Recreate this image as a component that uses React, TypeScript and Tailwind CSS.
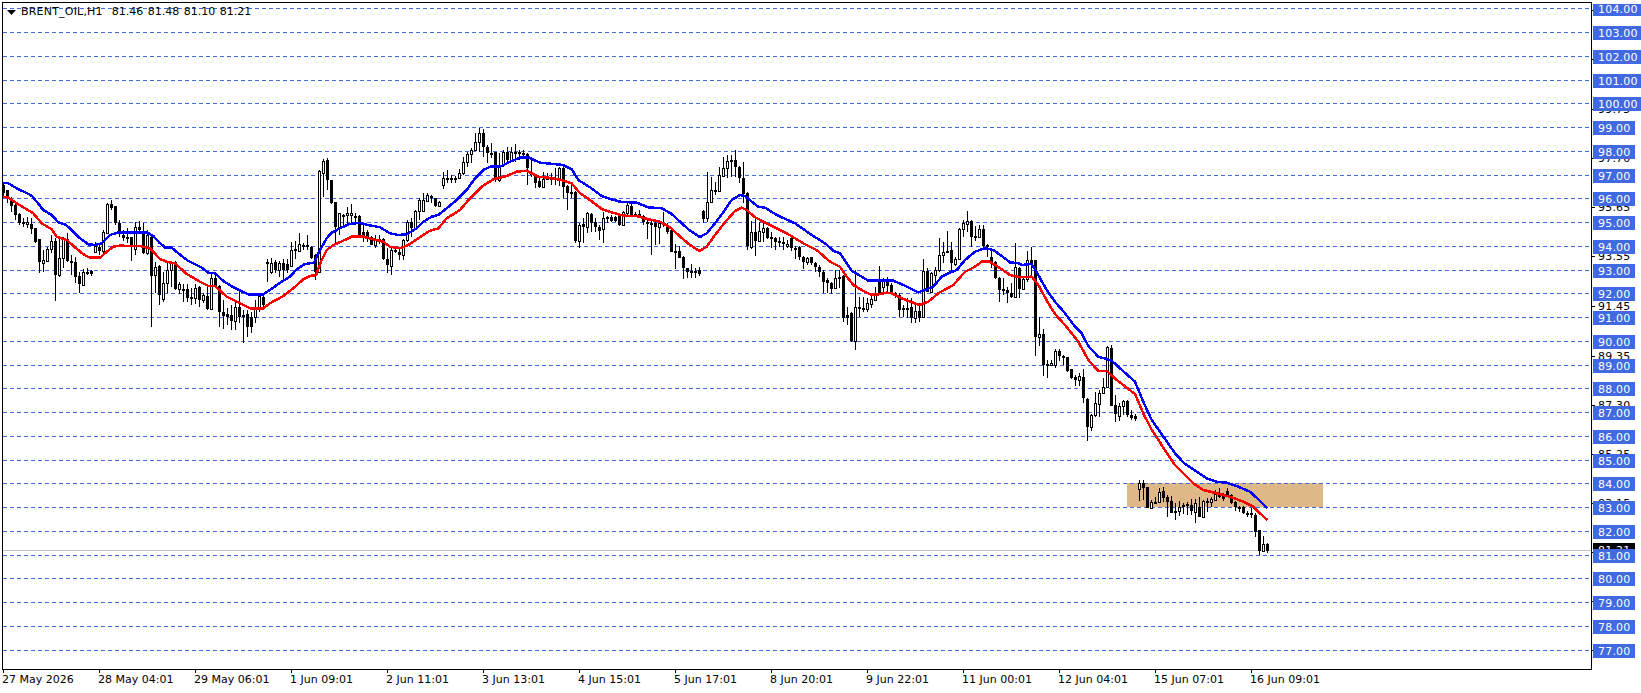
import type { ReactElement } from 'react';

// price levels drawn as horizontal lines: [label, y]
const levels: [string, number][] = [
  ['104.00', 8], ['103.00', 32], ['102.00', 56], ['101.00', 80], ['100.00', 103],
  ['99.00', 127], ['98.00', 151], ['97.00', 175], ['96.00', 198], ['95.00', 222],
  ['94.00', 246], ['93.00', 270], ['92.00', 293], ['91.00', 317], ['90.00', 341],
  ['89.00', 365], ['88.00', 388], ['87.00', 412], ['86.00', 436], ['85.00', 460],
  ['84.00', 483], ['83.00', 507], ['82.00', 531], ['81.00', 555], ['80.00', 578],
  ['79.00', 602], ['78.00', 626], ['77.00', 650],
];

const priceTicks: [string, number][] = [
  ['99.75', 109], ['97.70', 158], ['95.65', 207], ['93.55', 256], ['91.45', 306],
  ['89.35', 356], ['87.30', 405], ['85.25', 454], ['83.15', 503],
];
const hiddenTicks = [10, 59, 552, 601, 650];

const times = [
  '27 May 2026', '28 May 04:01', '29 May 06:01', '1 Jun 09:01', '2 Jun 11:01', '3 Jun 13:01', '4 Jun 15:01',
  '5 Jun 17:01', '8 Jun 20:01', '9 Jun 22:01', '11 Jun 00:01', '12 Jun 04:01', '15 Jun 07:01', '16 Jun 09:01',
];

// candles: [bodyTop, bodyBottom, high, low, bull], read off 3x crops
type Bar = [number, number, number, number, number];
type Segment = { oy: number; bars: Bar[] };

const segments: Segment[] = [
  {
    oy: 160,
    bars: [
      [75,100,65,110,0],[90,118,90,130,0],[118,138,110,155,0],[135,165,130,180,0],[163,190,160,195,0],[187,190,175,200,0],
      [185,192,170,205,1],[192,207,175,222,0],[205,245,205,250,0],[237,305,237,340,0],[300,308,270,335,1],[267,302,260,305,1],
      [243,267,225,280,1],[243,345,235,422,0],[295,345,235,350,1],[238,295,232,325,1],[238,303,220,305,0],[303,308,285,345,0],
      [306,350,292,368,0],[347,372,335,398,0],[335,375,328,378,1],[335,337,325,345,0],[333,341,330,348,0],[258,275,245,280,1],
      [260,272,250,285,0],[215,272,210,285,1],[133,218,130,220,1],[132,145,120,150,0],[138,190,138,195,0],[188,222,180,230,0],
      [225,233,210,242,0],[232,233,205,248,0],[230,255,230,302,0],[200,268,185,285,1],[202,210,183,215,0],[212,278,190,282,0],
      [225,278,210,285,1],[230,347,225,500,0],[322,345,305,400,1],[318,405,315,435,0],[370,418,335,425,1],[330,370,310,400,1],
      [310,330,302,380,1],[305,388,303,390,0],[372,388,365,403,1],[387,388,372,425,0],[388,415,372,425,0],[412,415,385,435,0],
      [385,415,372,432,1],[382,420,378,440,0],[405,420,400,430,1],[408,447,380,450,0],[355,448,342,450,1],[355,380,345,385,0],
      [378,457,375,500,0],[457,468,420,508,0],[462,470,445,495,0],[465,482,435,510,0],[442,482,420,510,1],[440,470,395,490,0],
      [465,470,450,550,0],[462,500,450,532,0],[470,500,455,520,0],[445,472,420,490,1],[408,445,405,455,1],[410,435,405,440,0],
      [307,309,298,365,0],[310,335,293,342,1],[307,330,300,338,0],[310,330,302,350,1],[310,330,298,357,0],[312,330,298,340,0],
      [270,317,245,320,1],[268,270,242,298,0],[253,272,218,275,1],[254,258,250,270,0],[256,262,225,270,0],[260,295,258,298,0],
      [285,337,282,360,0],
    ],
  },
  {
    oy: 110,
    bars: [
      [183,487,180,490,1],[153,188,148,260,1],[150,210,143,240,0],[210,278,210,282,0],[277,350,275,400,0],[310,350,308,375,1],
      [315,318,312,345,0],[310,315,290,345,1],[310,315,283,340,1],[317,320,310,345,1],[318,378,315,380,0],[367,380,340,395,0],
      [365,382,360,395,0],[382,405,378,405,0],[388,405,375,415,1],[388,395,375,402,0],[388,447,385,450,0],[447,465,415,490,0],
      [420,467,415,495,1],[420,425,415,430,0],[425,435,412,450,0],[390,435,388,450,1],[335,390,330,395,1],[335,355,325,382,0],
      [303,355,300,360,1],[270,303,265,330,1],[270,302,250,305,1],[255,272,250,275,1],[258,264,255,280,0],[265,287,265,290,0],
      [277,288,272,292,1],[205,224,185,236,1],[203,205,180,220,0],[205,208,195,220,0],[204,208,198,220,0],[190,205,178,208,1],
      [155,190,142,195,1],[132,155,125,170,1],[120,132,115,160,1],[95,120,70,122,1],[68,95,55,125,1],[68,110,58,140,0],
      [110,130,105,160,0],[128,130,98,145,0],[125,210,125,215,0],[165,210,130,215,1],[125,165,120,170,1],[125,150,112,155,0],
      [125,150,112,155,1],[125,130,103,155,0],[127,129,120,150,0],[130,133,120,145,0],[133,175,130,225,0],[185,195,150,200,0],
      [195,218,195,235,0],[212,232,205,235,0],[207,232,185,232,1],[205,207,190,210,1],[205,208,190,225,0],[205,208,175,225,0],
      [175,205,170,228,1],[175,230,170,265,0],[228,250,225,300,0],[245,248,225,265,0],[245,392,243,400,0],[345,392,340,415,1],
      [343,352,325,400,0],[310,352,305,370,1],[312,338,308,365,0],[335,350,325,365,0],[350,363,345,390,0],[325,358,305,398,1],
      [322,325,318,340,0],[320,333,315,335,0],[320,332,318,335,0],[318,345,315,348,0],[305,345,303,348,1],[285,310,280,315,1],
      [288,315,283,318,0],[312,318,305,320,0],[312,320,300,325,0],[318,337,315,345,0],[335,340,330,388,0],[338,342,328,435,0],
      [338,350,330,405,0],[340,350,330,402,1],[338,342,305,350,0],[345,365,340,372,0],
    ],
  },
  {
    oy: 135,
    bars: [
      [285,350,282,352,0],[348,350,328,403,0],[348,368,332,370,0],[365,400,362,432,0],[400,410,398,428,0],[407,409,388,428,0],
      [407,409,398,428,0],[405,416,395,422,0],[228,252,225,265,0],[202,250,112,262,1],[165,202,125,205,1],[165,167,140,180,1],
      [120,167,97,170,1],[98,122,65,125,1],[78,100,60,130,1],[76,78,60,125,1],[75,97,45,125,0],[95,128,92,145,0],
      [128,178,80,205,0],[175,333,170,345,0],[290,335,258,342,1],[290,318,250,362,0],[288,318,262,320,1],[280,290,258,320,1],
      [280,310,275,312,0],[307,310,290,340,0],[310,320,305,345,0],[318,323,305,335,0],[322,328,305,345,0],[326,332,315,340,1],
      [310,340,305,348,0],[338,340,333,372,0],[335,367,333,375,0],[367,380,362,402,0],[370,380,365,390,1],[367,385,365,390,0],
      [385,397,380,412,0],[395,412,390,425,0],[412,440,405,475,0],[435,445,430,475,0],[445,462,440,478,0],[430,460,405,462,1],
      [426,430,405,460,0],[424,550,420,560,0],[540,550,515,570,0],[535,618,530,620,0],[515,618,405,645,1],[515,518,485,545,0],
      [518,520,485,530,0],[505,522,490,530,1],[492,508,480,520,1],[480,494,455,496,1],[440,478,392,480,0],[435,455,430,475,1],
      [435,452,425,470,0],[450,475,445,480,0],[475,478,470,490,0],[480,525,475,545,0],[520,522,510,545,0],[518,520,490,548,0],
      [515,548,490,565,0],[528,548,510,565,1],[528,548,505,560,0],[408,545,372,548,1],[408,470,400,472,0],[415,470,410,472,1],
      [405,420,395,440,1],[360,405,310,410,1],[352,360,320,385,1],[348,352,288,350,1],[345,385,320,410,0],[372,387,365,392,1],
      [282,372,278,375,1],[265,282,255,305,1],[257,268,228,290,1],[257,305,255,335,0],[303,306,272,318,0],[282,306,270,310,1],
      [282,332,270,335,0],[330,335,328,365,0],[365,385,345,398,0],[380,430,378,432,0],[430,465,425,500,0],[462,467,430,480,0],
      [465,473,455,505,0],[473,485,445,488,0],
    ],
  },
  {
    oy: 190,
    bars: [
      [232,320,158,322,1],[235,298,232,325,0],[268,298,258,300,1],[210,268,182,275,1],[210,220,170,262,0],[210,442,210,498,0],
      [433,440,382,468,1],[433,525,418,558,0],[523,525,510,563,0],[518,524,510,527,1],[482,525,477,535,1],[483,497,478,512,0],
      [498,501,495,525,0],[502,542,500,545,0],[538,565,538,568,0],[562,570,555,587,0],[558,570,550,588,1],[562,625,537,638,0],
      [627,712,625,753,0],[675,712,672,722,1],[640,675,607,680,1],[610,643,600,680,1],[590,610,565,612,1],[472,592,468,595,1],
      [475,647,465,648,0],[645,673,615,695,0],[648,677,640,692,1],[634,647,630,676,1],[632,675,630,680,0],[675,683,660,690,0],
      [678,688,672,692,0],
    ],
  },
  {
    oy: 440,
    bars: [
      [130,147,120,182,1],[128,145,120,180,0],[140,203,140,203,0],[187,203,180,203,1],[187,189,172,192,0],[156,185,145,187,1],
      [153,175,140,185,0],[170,185,165,230,0],[183,218,168,220,0],[212,214,190,240,0],[200,212,182,228,1],[195,200,188,222,0],
      [192,197,185,225,0],[196,212,178,225,0],[190,215,178,248,1],[200,230,172,232,0],[183,232,180,235,1],[183,190,175,215,0],
      [177,187,170,202,1],[163,180,150,182,1],[163,171,143,175,0],[168,178,160,183,0],[152,168,145,172,0],[165,188,162,192,0],
      [185,200,183,212,0],[202,204,198,215,0],[202,218,198,222,0],[218,223,212,232,0],[220,226,205,235,0],
    ],
  },
  {
    oy: 470,
    bars: [
      [135,185,130,200,0],[181,243,181,255,0],[222,243,198,243,1],[222,243,218,248,0],
    ],
  },
];

const candles = segments.flatMap(({ oy, bars }) =>
  bars.map(([t, b, h, l, k]) => ({
    top: Math.round(oy + t / 3),
    bottom: Math.round(oy + b / 3),
    high: Math.round(oy + h / 3),
    low: Math.round(oy + l / 3),
    bull: k === 1,
  })),
);

// turns [x, y] pairs from a 3x crop into page pixels
const crop = (ox: number, oy: number, pts: number[]): string[] => {
  const out: string[] = [];
  for (let i = 0; i < pts.length; i += 2) {
    out.push(`${(ox + pts[i] / 3).toFixed(1)},${(oy + pts[i + 1] / 3).toFixed(1)}`);
  }
  return out;
};

const bluePath = [
  ...crop(0, 160, [8,68,25,70,50,85,75,97,95,107,110,125,130,150,155,165,175,187,195,193,215,210,240,235,265,253,285,255,305,250,330,225,355,217,385,218,415,217,440,217,460,228,480,250,495,262,515,263,535,280,565,303,605,323,625,338,645,340,670,363,700,382,745,403,790,403,810,390,840,368]),
  ...crop(290, 110, [0,500,20,478,45,462,72,458,90,420,110,385,125,368,150,355,175,343,205,338,235,345,270,352,300,370,325,375,350,373,380,355,400,335,425,320,445,315,470,295,500,270,530,240,555,205,580,180,600,170,630,170,660,155,690,143,715,142,750,158,790,162,820,165,845,178,865,210,900,232,935,258,965,268,990,275,1040,278,1075,292,1115,295,1145,312,1170,335,1200,362]),
  ...crop(670, 135, [90,306,110,295,135,265,160,232,185,195,210,180,225,183,245,200,265,215,285,218,320,240,375,265,425,300,465,325,490,347,510,355,530,385,545,408,575,425,595,437,635,437,670,437,700,450,745,472,790,455,815,425,835,415,860,405,885,375,915,350,945,340]),
  ...crop(940, 190, [160,180,185,198,210,217,235,220,245,225,275,222,295,255,320,300,345,335,375,370,405,410,425,430,445,468,475,500,500,507,515,512,540,535,585,575,610,635,635,690,655,718]),
  ...crop(1060, 440, [345,40,375,72,410,95,440,115,470,125,500,128,535,140,570,155,595,178,622,205]),
].join(' ');

const redPath = [
  ...crop(0, 160, [8,110,25,113,50,130,75,145,100,160,125,190,155,208,170,230,200,240,225,262,250,283,270,293,300,293,320,275,340,260,360,257,420,258,450,265,480,297,500,305,525,310,560,342,600,365,625,378,645,378,680,410,720,430,750,445,790,445,810,430,850,408,880,385]),
  ...crop(290, 110, [40,508,60,498,78,495,95,450,110,420,130,405,160,392,185,380,220,380,250,388,280,395,300,410,330,415,355,405,385,385,420,362,445,355,470,325,510,300,540,265,575,230,610,208,650,198,680,185,710,182,745,200,775,203,815,210,845,220,870,250,900,270,935,297,965,307,1000,317,1040,318,1075,328,1110,335,1140,352,1165,375,1200,405]),
  ...crop(670, 135, [88,348,110,335,135,300,165,262,195,228,215,218,230,225,255,247,300,270,350,295,400,325,440,345,480,380,510,395,530,425,550,450,575,465,600,478,625,478,650,473,665,475,700,492,748,510,775,500,805,475,850,450,885,410,915,395,935,380,960,380]),
  ...crop(940, 190, [180,235,210,255,240,262,275,260,295,285,325,340,345,372,375,405,415,455,445,510,475,543,500,543,530,570,585,612,610,670,635,720]),
  ...crop(1060, 440, [315,30,345,75,375,105,400,130,430,150,470,160,510,170,550,185,580,200,600,220,622,240]),
].join(' ');

function Chart(): ReactElement {
  return (
    <svg width={1588} height={666} viewBox="3 3 1588 666" shapeRendering="crispEdges" className="block">
      <rect x={1127} y={483} width={196} height={24} fill="#deb887" />
      {levels.map(([label, y]) => (
        <line key={label} x1={3} x2={1591} y1={y + 0.5} y2={y + 0.5} stroke="#4169e1" strokeDasharray="4 3" />
      ))}
      <line x1={3} x2={1591} y1={550.5} y2={550.5} stroke="#c0c0c0" />
      {candles.map((c, i) => {
        const x = 3 + i * 4;
        return (
          <g key={i}>
            <rect x={x} y={c.high} width={1} height={Math.max(c.low - c.high, 1)} fill="#000" />
            {c.bull ? (
              <rect x={x - 0.5} y={c.top + 0.5} width={2} height={Math.max(c.bottom - c.top, 1)} fill="#fff" stroke="#000" />
            ) : (
              <rect x={x - 1} y={c.top} width={3} height={Math.max(c.bottom - c.top, 2)} fill="#000" />
            )}
          </g>
        );
      })}
      <polyline points={redPath} fill="none" stroke="#ff0000" strokeWidth={2.5} />
      <polyline points={bluePath} fill="none" stroke="#0000ff" strokeWidth={2.5} />
    </svg>
  );
}

function PriceAxis(): ReactElement {
  return (
    <div className="relative mt-[2px] h-[666px] w-[49px] overflow-hidden tracking-[0.2px]">
      {[...priceTicks.map((t) => t[1]), ...hiddenTicks].map((y) => (
        <div key={y} className="absolute left-0 h-px w-[3px] bg-black" style={{ top: y - 4 }} />
      ))}
      {priceTicks.map(([label, y]) => (
        <div key={label} className="absolute left-[6px] leading-[14px] text-black" style={{ top: y - 10 }}>
          {label}
        </div>
      ))}
      <div className="absolute left-px top-[539px] h-[14px] w-[42px] bg-black pl-[5px] pt-px leading-[14px] text-white">81.21</div>
      {levels.map(([label, y]) => (
        <div
          key={label}
          className={`absolute left-px h-[14px] bg-[#4169e1] pl-[5px] pt-px leading-[14px] text-white ${label.length > 5 ? 'w-[48px]' : 'w-[42px]'}`}
          style={{ top: y - 10 }}
        >
          {label}
        </div>
      ))}
    </div>
  );
}

export default function App(): ReactElement {
  return (
    <div className="flex h-[693px] w-[1641px] flex-col overflow-hidden bg-white pl-[2px] pt-[2px] font-['DejaVu_Sans',sans-serif] text-[11px] text-black">
      <div className="flex">
        <div className="relative h-[668px] w-[1590px] border border-black">
          <Chart />
          <div className="absolute left-[4px] top-[2px] flex h-[14px] items-center whitespace-pre leading-[14px]">
            <svg width={9} height={5} viewBox="0 0 9 5" className="mr-[5px] block">
              <path d="M0 0h9L4.5 5z" fill="#000" />
            </svg>
            <span className="mr-[9px] tracking-[0.2px]">BRENT_OIL,H1</span>
            <span className="[word-spacing:1px]">81.46 81.48 81.10 81.21</span>
          </div>
        </div>
        <PriceAxis />
      </div>
      <div className="ml-px flex">
        {times.map((t) => (
          <div key={t} className="w-[96px] shrink-0">
            <div className="h-[3px] w-px bg-black" />
            <div className="-ml-px whitespace-nowrap leading-[14px]">{t}</div>
          </div>
        ))}
      </div>
    </div>
  );
}
